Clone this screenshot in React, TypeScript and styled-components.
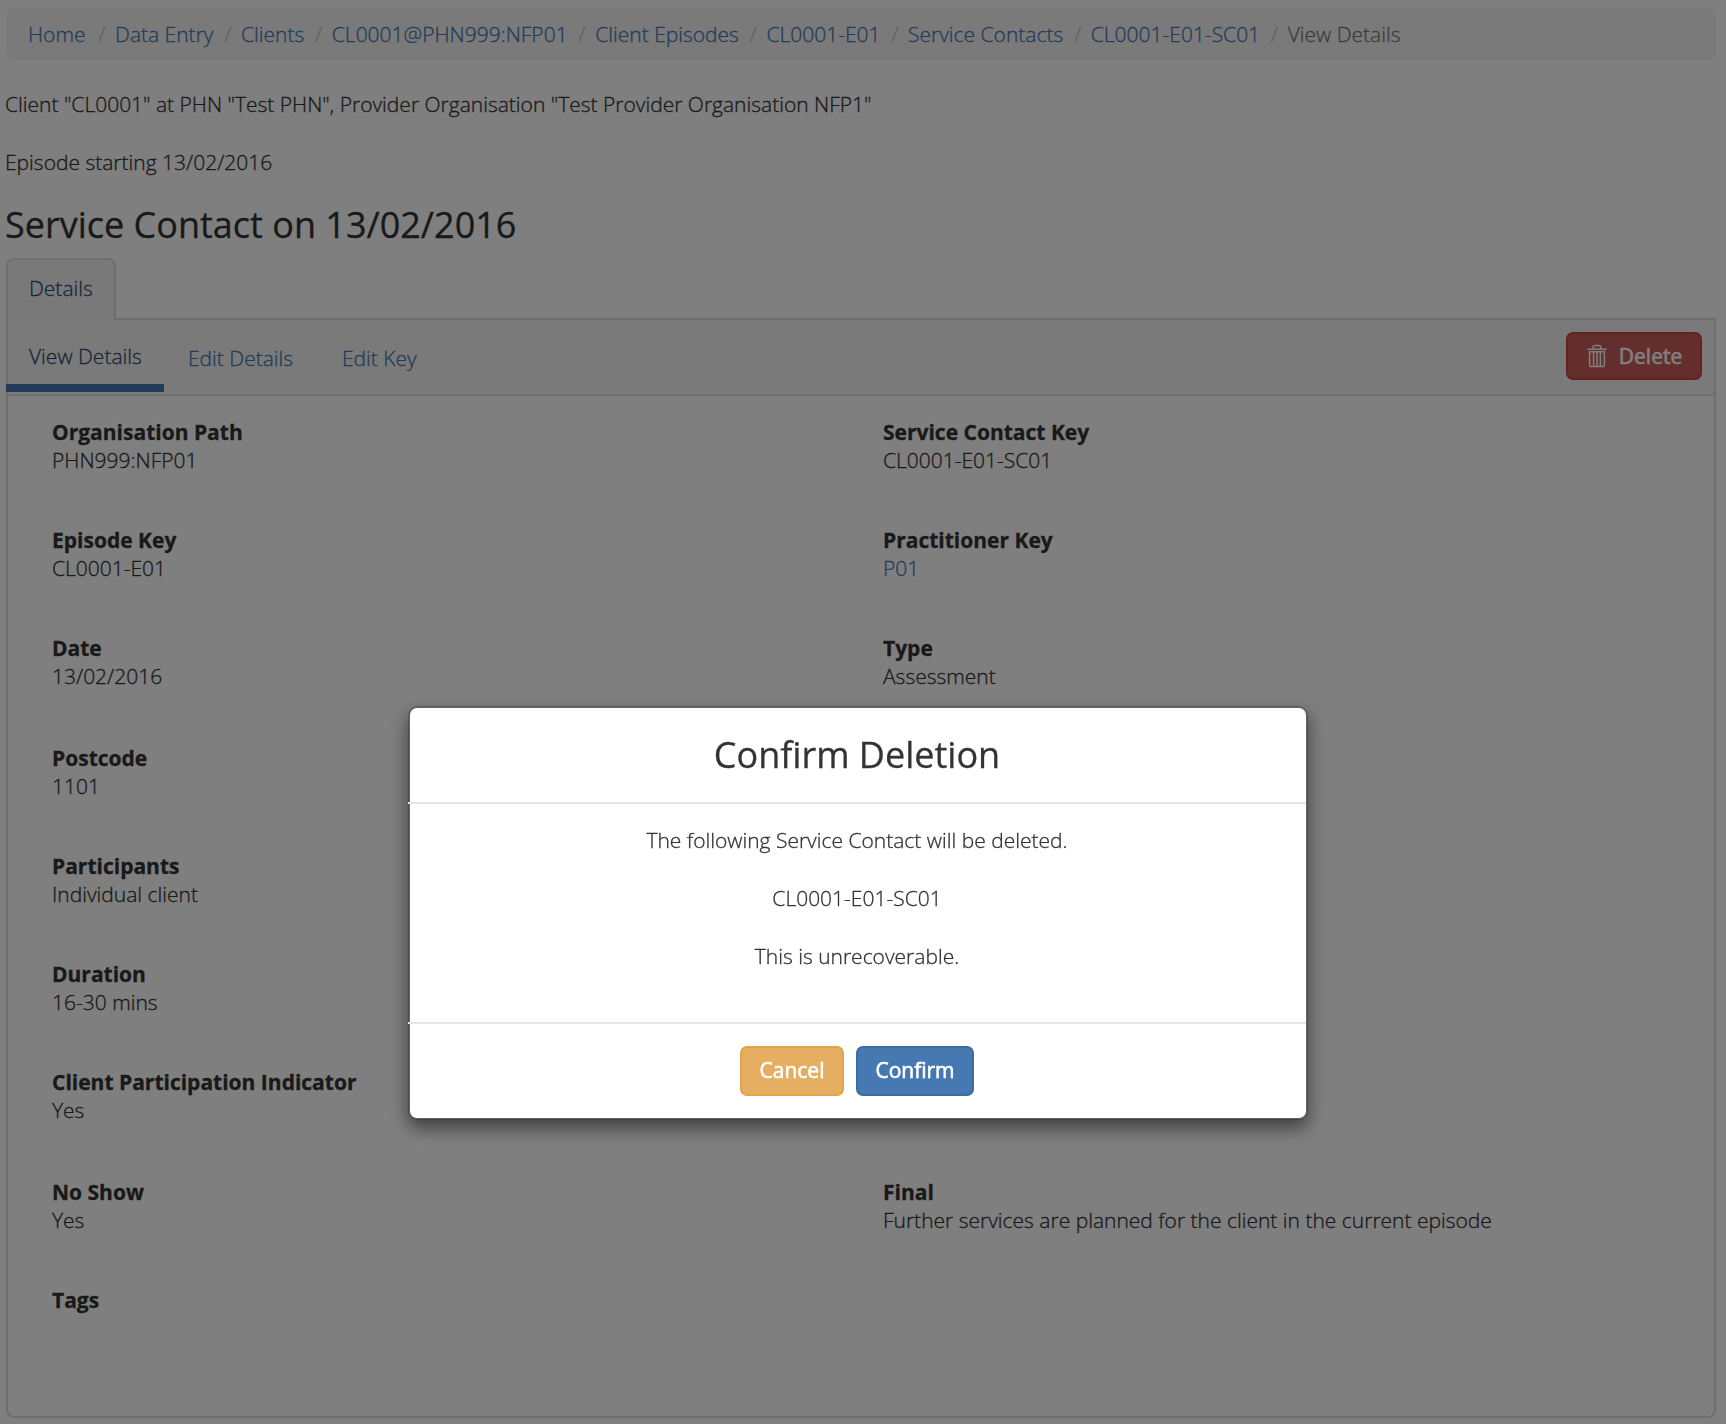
import React from "react";
import styled, { createGlobalStyle } from "styled-components";

const Global = createGlobalStyle`
  * { box-sizing: border-box; }
  html, body { margin: 0; background: #fff; }
  body {
    font-family: "Open Sans", "Noto Sans", sans-serif;
    font-size: 21px;
    font-weight: 300;
    line-height: 28px;
    color: #333;
    overflow: hidden;
    -webkit-text-stroke: 0.3px currentColor;
  }
`;

const Page = styled.div`
  height: 1424px;
  padding: 8px 10px 6px 6px;
  display: flex;
  flex-direction: column;
`;

const Breadcrumb = styled.ol`
  list-style: none;
  margin: 0;
  padding: 0 22px;
  height: 52px;
  flex: none;
  display: flex;
  align-items: center;
  background: #f5f5f5;
  border-radius: 8px;
  white-space: nowrap;
`;

const Crumb = styled.li`
  color: #777;
  &:first-child { margin-right: 2px; }
  & + &::before {
    content: "/";
    color: #c4c4c4;
    padding: 0 9.7px 0 10.7px;
  }
`;

const Link = styled.a`
  color: #4577b0;
  text-decoration: none;
`;

const Context = styled.p`
  margin: 30px 0 0 -1px;
  white-space: nowrap;
  & + & { margin-top: 30px; }
`;

const Title = styled.h3`
  margin: 23px 0 0 -1px;
  font-size: 36px;
  font-weight: 400;
  line-height: 52px;
  white-space: nowrap;
`;

const Tabs = styled.div`
  display: flex;
  height: 62px;
  margin-top: 7px;
  flex: none;
`;

const Tab = styled.div`
  width: 110px;
  padding: 14px 0 0 21px;
  background: #f3f3f3;
  border: 2px solid #ddd;
  border-bottom: 0;
  border-radius: 8px 8px 0 0;
  color: #32496d;
`;

const TabsRest = styled.div`
  flex: 1;
  border-bottom: 2px solid #ddd;
`;

const Panel = styled.section`
  flex: 1;
  border: 2px solid #ddd;
  border-top: 0;
  border-radius: 0 0 8px 8px;
`;

const SubTabs = styled.nav`
  height: 76px;
  display: flex;
  align-items: flex-start;
  background: #f5f5f5;
  border-bottom: 2px solid #ddd;
  padding-right: 12px;
`;

const SubTab = styled.a<{ $active?: boolean; $width: number }>`
  width: ${(p) => p.$width}px;
  height: ${(p) => (p.$active ? 72 : 74)}px;
  margin-left: ${(p) => (p.$active ? -2 : 0)}px;
  padding: ${(p) => (p.$active ? "22px 0 0 23px" : "24px 0 0 24px")};
  color: ${(p) => (p.$active ? "#32496d" : "#4577b0")};
  border-bottom: ${(p) => (p.$active ? "8px solid #4577b0" : "0")};
  white-space: nowrap;
`;

const Button = styled.button<{ $fill: string; $edge: string; $width: number; $height: number }>`
  width: ${(p) => p.$width}px;
  height: ${(p) => p.$height}px;
  padding: 0 0 3px;
  display: inline-flex;
  align-items: center;
  justify-content: center;
  font: inherit;
  font-weight: 500;
  -webkit-text-stroke: 0.6px currentColor;
  color: #fff;
  background: ${(p) => p.$fill};
  border: 2px solid ${(p) => p.$edge};
  border-radius: 7px;
`;

const DeleteButton = styled(Button)`
  margin: 12px 0 0 auto;
  padding: 0 0 1px 1px;
  gap: 12px;
`;

const Fields = styled.dl`
  margin: 0;
  padding: 22px 0 0 44px;
  display: grid;
  grid-template-columns: 831px 1fr;
  grid-template-rows: 108px 108px 110px 108px 108px 108px 110px 108px;
`;

const Field = styled.div<{ $column: number }>`
  grid-column: ${(p) => p.$column};
`;

const Label = styled.dt`
  font-weight: 700;
`;

const Value = styled.dd`
  margin: 0;
`;

const Backdrop = styled.div`
  position: fixed;
  inset: 0;
  background: rgba(0, 0, 0, 0.5);
  display: flex;
  justify-content: center;
  align-items: flex-start;
  padding: 706px 10px 0 0;
`;

const Dialog = styled.div`
  width: 900px;
  height: 414px;
  display: flex;
  flex-direction: column;
  background: #fff;
  background-clip: padding-box;
  border: 2px solid rgba(0, 0, 0, 0.2);
  border-radius: 9px;
  box-shadow: 0 8px 18px rgba(0, 0, 0, 0.5);
  text-align: center;
`;

const DialogHeader = styled.header`
  height: 96px;
  margin-left: -2px;
  padding-top: 21px;
  border-bottom: 2px solid #e5e5e5;
  font-size: 36px;
  font-weight: 400;
  line-height: 52px;
`;

const DialogBody = styled.div`
  height: 218px;
  padding-top: 22px;
  margin-left: -2px;
  display: flex;
  flex-direction: column;
  gap: 30px;
`;

const DialogFooter = styled.footer`
  flex: 1;
  margin-left: -2px;
  padding-top: 22px;
  border-top: 2px solid #e5e5e5;
  display: flex;
  justify-content: center;
  align-items: flex-start;
  gap: 12px;
`;

const TrashIcon = () => (
  <svg width="20" height="24" viewBox="0 0 20 24" fill="none" stroke="#fff" strokeWidth="1.5">
    <path d="M0.3 5.2H19.7" />
    <path d="M6.2 5V3.2C6.2 2 6.8 1.4 8 1.4H12C13.2 1.4 13.8 2 13.8 3.2V5" />
    <path d="M2.6 7.8H17.4V20.8C17.4 22 16.8 22.6 15.6 22.6H4.4C3.2 22.6 2.6 22 2.6 20.8Z" />
    <path d="M6.6 8V22.4M10 8V22.4M13.4 8V22.4" />
  </svg>
);

const crumbs = [
  "Home",
  "Data Entry",
  "Clients",
  "CL0001@PHN999:NFP01",
  "Client Episodes",
  "CL0001-E01",
  "Service Contacts",
  "CL0001-E01-SC01",
];

const fields: { label: string; value?: string; column: number; link?: boolean }[] = [
  { label: "Organisation Path", value: "PHN999:NFP01", column: 1 },
  { label: "Service Contact Key", value: "CL0001-E01-SC01", column: 2 },
  { label: "Episode Key", value: "CL0001-E01", column: 1 },
  { label: "Practitioner Key", value: "P01", column: 2, link: true },
  { label: "Date", value: "13/02/2016", column: 1 },
  { label: "Type", value: "Assessment", column: 2 },
  { label: "Postcode", value: "1101", column: 1 },
  { label: "Participants", value: "Individual client", column: 1 },
  { label: "Duration", value: "16-30 mins", column: 1 },
  { label: "Client Participation Indicator", value: "Yes", column: 1 },
  { label: "No Show", value: "Yes", column: 1 },
  { label: "Final", value: "Further services are planned for the client in the current episode", column: 2 },
  { label: "Tags", column: 1 },
];

export default function App() {
  return (
    <>
      <Global />
      <Page>
        <Breadcrumb>
          {crumbs.map((name) => (
            <Crumb key={name}>
              <Link>{name}</Link>
            </Crumb>
          ))}
          <Crumb>View Details</Crumb>
        </Breadcrumb>
        <Context>Client "CL0001" at PHN "Test PHN", Provider Organisation "Test Provider Organisation NFP1"</Context>
        <Context>Episode starting 13/02/2016</Context>
        <Title>Service Contact on 13/02/2016</Title>
        <Tabs>
          <Tab>Details</Tab>
          <TabsRest />
        </Tabs>
        <Panel>
          <SubTabs>
            <SubTab $active $width={158}>View Details</SubTab>
            <SubTab $width={154}>Edit Details</SubTab>
            <SubTab $width={120}>Edit Key</SubTab>
            <DeleteButton $fill="#c95c58" $edge="#c24440" $width={136} $height={48}>
              <TrashIcon />
              Delete
            </DeleteButton>
          </SubTabs>
          <Fields>
            {fields.map((f) => (
              <Field key={f.label} $column={f.column}>
                <Label>{f.label}</Label>
                {f.value && <Value>{f.link ? <Link>{f.value}</Link> : f.value}</Value>}
              </Field>
            ))}
          </Fields>
        </Panel>
      </Page>
      <Backdrop>
        <Dialog role="dialog">
          <DialogHeader>Confirm Deletion</DialogHeader>
          <DialogBody>
            <span>The following Service Contact will be deleted.</span>
            <span>CL0001-E01-SC01</span>
            <span>This is unrecoverable.</span>
          </DialogBody>
          <DialogFooter>
            <Button $fill="#e5ae60" $edge="#e2a34b" $width={104} $height={50}>Cancel</Button>
            <Button $fill="#4678b2" $edge="#3e6ba1" $width={118} $height={50}>Confirm</Button>
          </DialogFooter>
        </Dialog>
      </Backdrop>
    </>
  );
}
